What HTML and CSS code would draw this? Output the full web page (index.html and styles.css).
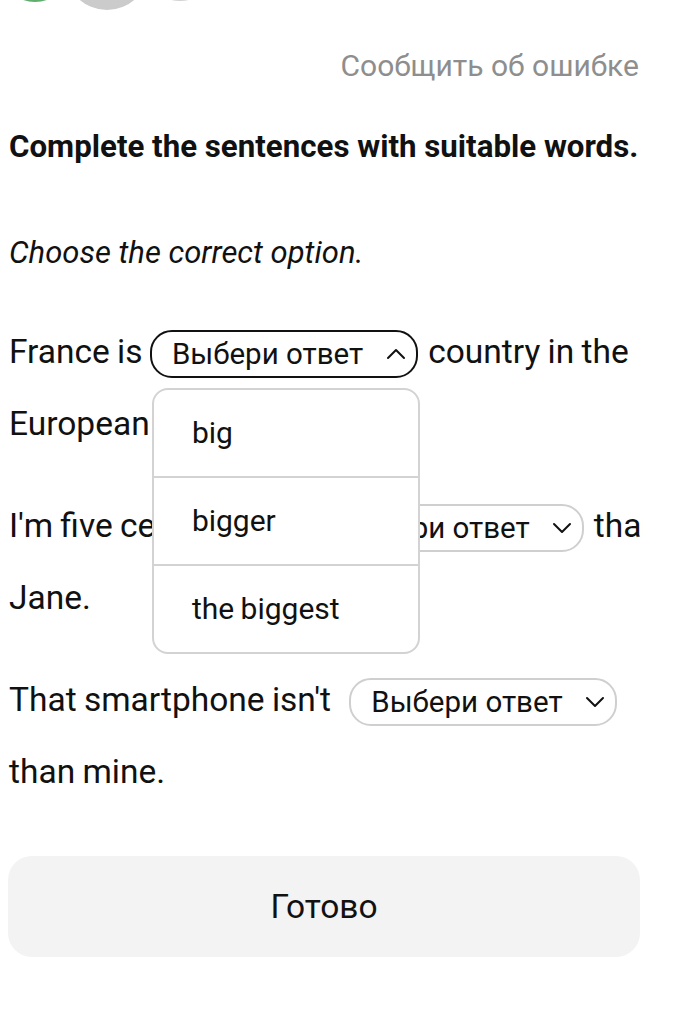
FILE: index.html
```html
<!DOCTYPE html>
<html lang="ru">
<head>
<meta charset="utf-8">
<title>Exercise</title>
<link rel="stylesheet" href="styles.css">
</head>
<body>
<div class="steps">
  <span class="step step-done"></span>
  <span class="step step-current"></span>
  <span class="step step-next"></span>
</div>
<div class="report">Сообщить об ошибке</div>
<h1 class="task">Complete the sentences with suitable words.</h1>
<p class="hint">Choose the correct option.</p>

<p class="sentence">France is <span class="select-wrap"><span class="pill pill-open">Выбери ответ<svg class="chev" viewBox="0 0 20 12" width="20" height="12"><polyline points="2,10 10,2 18,10"/></svg></span><span class="menu"><span class="opt">big</span><span class="opt">bigger</span><span class="opt">the biggest</span></span></span> country in the European Union.</p>

<p class="sentence clip"><span class="nowrap">I'm five centimetres <span class="pill pill-shift">Выбери ответ<svg class="chev" viewBox="0 0 20 12" width="20" height="12"><polyline points="2,2 10,10 18,2"/></svg></span> than</span> Jane.</p>

<p class="sentence">That smartphone isn't <span class="pill pill-wide">Выбери ответ<svg class="chev" viewBox="0 0 20 12" width="20" height="12"><polyline points="2,2 10,10 18,2"/></svg></span> than mine.</p>

<button class="done">Готово</button>
</body>
</html>
```
FILE: styles.css
```css
html, body {
  margin: 0;
  padding: 0;
  background: #fff;
}
body {
  font-family: Roboto, "Noto Sans", sans-serif;
  color: #111;
  padding: 0 41px 0 9px;
  width: 634px;
}
.steps {
  height: 10px;
  display: flex;
  align-items: flex-end;
  overflow: hidden;
  margin-left: -9px;
}
.step {
  flex: none;
  border-radius: 50%;
  box-sizing: border-box;
}
.step-done {
  width: 72px;
  height: 72px;
  background: #5fae6e;
  margin-left: -1px;
  margin-bottom: 8px;
}
.step-current {
  width: 84px;
  height: 84px;
  background: #cbcbcb;
  margin-left: -6px;
}
.step-next {
  width: 72px;
  height: 72px;
  background: #fff;
  border: 2px solid #d2d2d2;
  margin-left: -5px;
  margin-bottom: 9px;
}
.report {
  margin-top: 36px;
  text-align: right;
  font-size: 30px;
  line-height: 40px;
  color: #8e8e8e;
  padding-right: 4px;
}
.task {
  margin: 41px 0 0;
  font-size: 31.25px;
  line-height: 40px;
  font-weight: 700;
}
.hint {
  margin: 66px 0 0;
  font-size: 31px;
  line-height: 40px;
  font-style: italic;
}
.sentence {
  margin: 30px 0 0;
  font-size: 33.5px;
  word-spacing: -1px;
  line-height: 72px;
}
.hint + .sentence {
  margin-top: 43px;
}
.clip {
  overflow: hidden;
}
.nowrap {
  white-space: nowrap;
}
.select-wrap {
  position: relative;
  display: inline-block;
  vertical-align: middle;
  line-height: 0;
}
.pill {
  display: inline-flex;
  align-items: center;
  justify-content: space-between;
  box-sizing: border-box;
  width: 268px;
  height: 48px;
  padding: 0 10px 0 20px;
  margin: 0 2px;
  border: 2px solid #cfcfcf;
  border-radius: 22px;
  font-size: 29.5px;
  word-spacing: 0;
  line-height: 44px;
  vertical-align: middle;
  background: #fff;
}
.select-wrap .pill {
  margin: 0 3px 0 0;
}
.pill-shift {
  margin-left: 12px;
}
.pill-wide {
  margin-left: 11px;
}
.pill-open {
  border-color: #111;
}
.chev {
  fill: none;
  stroke: #111;
  stroke-width: 2;
  stroke-linecap: round;
  stroke-linejoin: round;
}
.menu {
  position: absolute;
  top: 58px;
  left: 2px;
  z-index: 5;
  display: flex;
  flex-direction: column;
  box-sizing: border-box;
  width: 268px;
  background: #fff;
  border: 2px solid #d3d3d3;
  border-radius: 16px;
  overflow: hidden;
}
.opt {
  display: flex;
  align-items: center;
  height: 86px;
  padding-left: 38px;
  font-size: 30px;
  line-height: 40px;
}
.opt + .opt {
  border-top: 2px solid #d3d3d3;
}
.done {
  display: block;
  margin: 48px 0 0 -1px;
  width: 632px;
  height: 101px;
  border: none;
  border-radius: 24px;
  background: #f3f3f3;
  font-family: inherit;
  font-size: 33.5px;
  color: #111;
  cursor: pointer;
}
```
